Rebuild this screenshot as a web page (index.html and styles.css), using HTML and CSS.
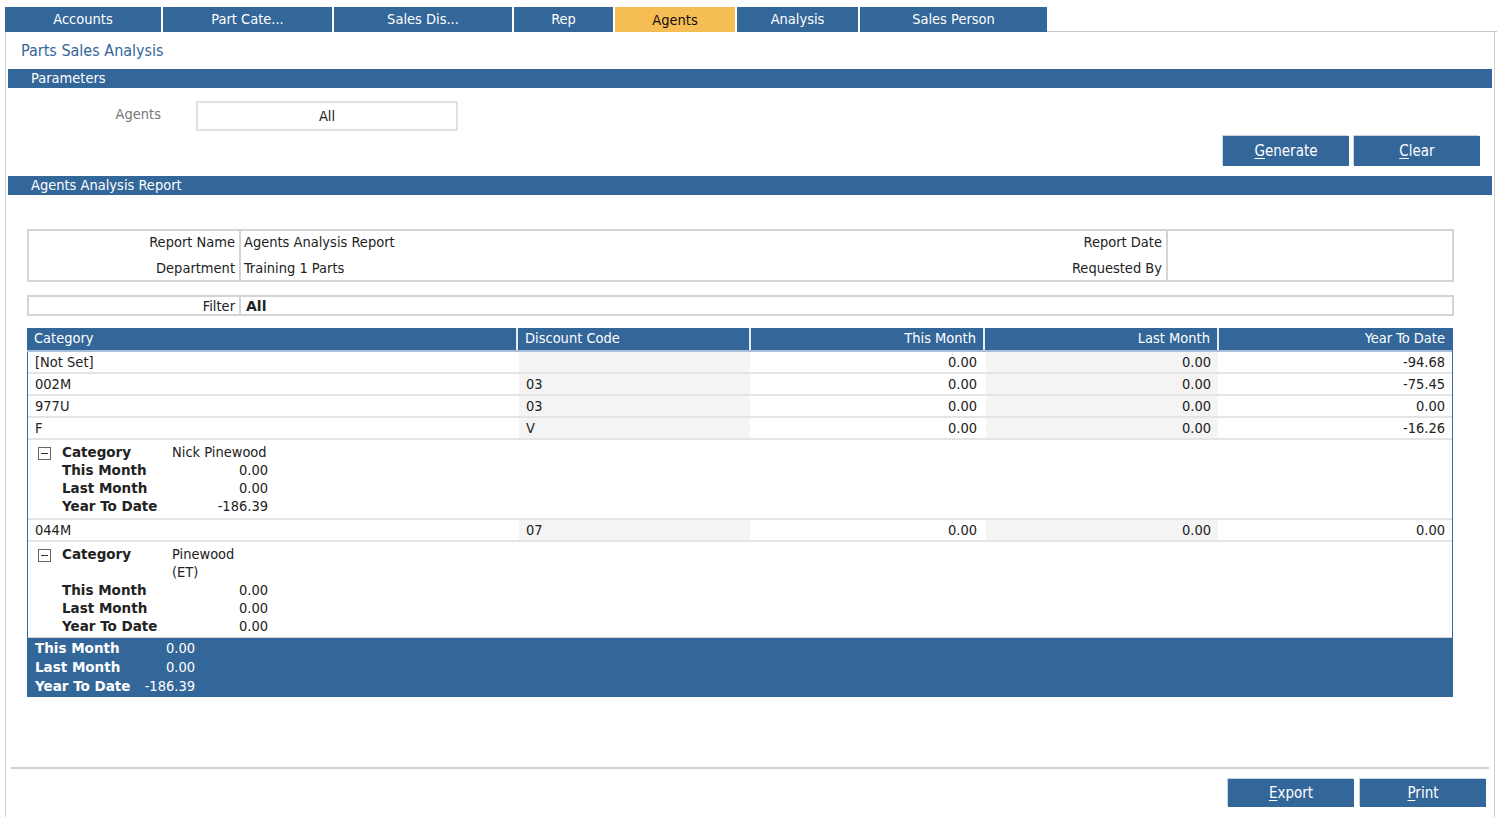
FILE: index.html
```html
<!DOCTYPE html>
<html lang="en">
<head>
    <meta charset="UTF-8">
    <title>Parts Sales Analysis</title>
    <link rel="stylesheet" href="styles.css">
</head>
<body>
    <div id="tabs">
        <div class="tab w156">Accounts</div>
        <div class="tab w169">Part Cate...</div>
        <div class="tab w178">Sales Dis...</div>
        <div class="tab w99">Rep</div>
        <div class="tab w120 active">Agents</div>
        <div class="tab w121">Analysis</div>
        <div class="tab w187">Sales Person</div>
        <div class="tab-rest"></div>
    </div>
    <div id="panel">
        <div class="page-title">Parts Sales Analysis</div>
        <div class="bar">Parameters</div>
        <div class="param-row">
            <div class="param-label">Agents</div>
            <div class="param-input">All</div>
        </div>
        <div class="btn-row">
            <div class="btn"><u>G</u>enerate</div>
            <div class="btn"><u>C</u>lear</div>
        </div>
        <div class="bar">Agents Analysis Report</div>

        <div class="report">
            <div class="info-box">
                <div class="info-left">
                    <div class="info-labels">
                        <div>Report Name</div>
                        <div>Department</div>
                    </div>
                    <div class="info-values">
                        <div>Agents Analysis Report</div>
                        <div>Training 1 Parts</div>
                    </div>
                </div>
                <div class="info-right">
                    <div class="info-labels">
                        <div>Report Date</div>
                        <div>Requested By</div>
                    </div>
                    <div class="info-values"></div>
                </div>
            </div>

            <div class="filter-box">
                <div class="filter-label">Filter</div>
                <div class="filter-value">All</div>
            </div>

            <div class="grid">
                <div class="grid-head">
                    <div class="c1">Category</div>
                    <div class="c2">Discount Code</div>
                    <div class="c3 num">This Month</div>
                    <div class="c4 num">Last Month</div>
                    <div class="c5 num">Year To Date</div>
                </div>
                <div class="grid-row">
                    <div class="c1">[Not Set]</div>
                    <div class="c2 alt"></div>
                    <div class="c3 num">0.00</div>
                    <div class="c4 num alt">0.00</div>
                    <div class="c5 num">-94.68</div>
                </div>
                <div class="grid-row">
                    <div class="c1">002M</div>
                    <div class="c2 alt">03</div>
                    <div class="c3 num">0.00</div>
                    <div class="c4 num alt">0.00</div>
                    <div class="c5 num">-75.45</div>
                </div>
                <div class="grid-row">
                    <div class="c1">977U</div>
                    <div class="c2 alt">03</div>
                    <div class="c3 num">0.00</div>
                    <div class="c4 num alt">0.00</div>
                    <div class="c5 num">0.00</div>
                </div>
                <div class="grid-row">
                    <div class="c1">F</div>
                    <div class="c2 alt">V</div>
                    <div class="c3 num">0.00</div>
                    <div class="c4 num alt">0.00</div>
                    <div class="c5 num">-16.26</div>
                </div>
                <div class="group-foot">
                    <span class="toggle"></span>
                    <div class="gf-table">
                        <div class="gf-key">Category</div><div class="gf-name">Nick Pinewood</div>
                        <div class="gf-key">This Month</div><div class="gf-val">0.00</div>
                        <div class="gf-key">Last Month</div><div class="gf-val">0.00</div>
                        <div class="gf-key">Year To Date</div><div class="gf-val">-186.39</div>
                    </div>
                </div>
                <div class="grid-row">
                    <div class="c1">044M</div>
                    <div class="c2 alt">07</div>
                    <div class="c3 num">0.00</div>
                    <div class="c4 num alt">0.00</div>
                    <div class="c5 num">0.00</div>
                </div>
                <div class="group-foot last">
                    <span class="toggle"></span>
                    <div class="gf-table">
                        <div class="gf-key">Category</div><div class="gf-name">Pinewood<br>(ET)</div>
                        <div class="gf-key">This Month</div><div class="gf-val">0.00</div>
                        <div class="gf-key">Last Month</div><div class="gf-val">0.00</div>
                        <div class="gf-key">Year To Date</div><div class="gf-val">0.00</div>
                    </div>
                </div>
                <div class="grand-total">
                    <div class="gt-key">This Month</div><div class="gt-val">0.00</div>
                    <div class="gt-key">Last Month</div><div class="gt-val">0.00</div>
                    <div class="gt-key">Year To Date</div><div class="gt-val">-186.39</div>
                </div>
            </div>
        </div>

        <div class="footer">
            <div class="btn"><u>E</u>xport</div>
            <div class="btn"><u>P</u>rint</div>
        </div>
    </div>
</body>
</html>
```

FILE: styles.css
```css
body {
    margin: 0;
    background: #fff;
    font-family: "DejaVu Sans Condensed", "DejaVu Sans", sans-serif;
    font-size: 14.5px;
    color: #222;
    overflow: hidden;
}
.gf-key, .gt-key, .filter-value {
    font-family: "DejaVu Sans", sans-serif;
    font-weight: bold;
    font-size: 13.5px;
    white-space: nowrap;
}
#tabs {
    display: flex;
    padding: 7px 0 0 5px;
    height: 25px;
}
.tab {
    background: #336699;
    color: #fff;
    text-align: center;
    line-height: 25px;
    font-size: 14.5px;
    margin-right: 2px;
    flex: none;
}
.tab.active {
    background: #f7bd55;
    color: #111;
    line-height: 27px;
}
.w156 { width: 156px; }
.w169 { width: 169px; }
.w178 { width: 178px; }
.w99 { width: 99px; }
.w120 { width: 120px; }
.w121 { width: 121px; }
.w187 { width: 187px; }
.tab-rest {
    flex: 1;
    border-bottom: 1px solid #c8c8c8;
    margin-right: 1px;
    margin-left: -2px;
}
#panel {
    margin-left: 5px;
    width: 1490px;
    height: 785px;
    border-left: 1px solid #d0d0d0;
    border-right: 1px solid #d0d0d0;
    box-sizing: border-box;
    padding: 0 2px;
    display: flex;
    flex-direction: column;
}
.page-title {
    color: #336699;
    font-size: 16px;
    padding: 9px 0 0 13px;
    height: 28px;
}
.bar {
    background: #336699;
    color: #fff;
    font-size: 14.5px;
    height: 19px;
    line-height: 19px;
    padding-left: 23px;
}
.param-row {
    display: flex;
    align-items: center;
    margin-top: 13px;
    height: 30px;
}
.param-label {
    width: 153px;
    text-align: right;
    color: #777;
    margin-top: -4px;
}
.param-input {
    margin-left: 35px;
    width: 258px;
    height: 26px;
    border: 2px solid #dde2e8;
    text-align: center;
    line-height: 26px;
}
.btn-row {
    display: flex;
    justify-content: flex-end;
    gap: 5px;
    padding-right: 12px;
    margin-top: 5px;
    margin-bottom: 10px;
}
.btn {
    width: 126px;
    height: 30px;
    line-height: 30px;
    background: #336699;
    color: #fff;
    text-align: center;
    font-size: 15px;
    box-shadow: -1px -1px 0 #c9d4e0;
}
.btn u {
    text-decoration-thickness: 1px;
    text-underline-offset: 2px;
}
.report {
    padding: 34px 38px 0 19px;
}
.info-box {
    display: flex;
    border: 2px solid #d4d4d4;
    height: 49px;
}
.info-left, .info-right {
    display: flex;
}
.info-left { flex: 1; }
.info-right { width: 424px; }
.info-labels {
    text-align: right;
    padding: 0 4px 0 0;
    line-height: 26px;
    border-right: 2px solid #d4d4d4;
}
.info-labels > div, .info-values > div {
    position: relative;
    top: -2px;
}
.info-left .info-labels { width: 206px; }
.info-right .info-labels { width: 134px; }
.info-values {
    padding: 0 0 0 3px;
    line-height: 26px;
    flex: 1;
}
.filter-box {
    display: flex;
    border: 2px solid #d4d4d4;
    height: 17px;
    margin-top: 13px;
    line-height: 18px;
}
.filter-label {
    width: 206px;
    text-align: right;
    padding-right: 4px;
    border-right: 2px solid #d4d4d4;
}
.filter-value {
    padding-left: 5px;
    font-size: 14px;
}
.grid {
    margin-top: 12px;
    margin-right: 1px;
    border-left: 1px solid #336699;
    border-right: 1px solid #336699;
}
.grid-head, .grid-row {
    display: flex;
}
.grid-head {
    background: #336699;
    color: #fff;
    height: 22px;
    line-height: 20px;
    border-bottom: 2px solid #a9bfd8;
    margin-left: -1px;
}
.grid-head > div {
    border-right: 2px solid #e6ecf3;
}
.grid-head > div:last-child { border-right: none; }
.grid-row {
    height: 20px;
    line-height: 20px;
    border-bottom: 2px solid #e4e4e4;
}
.grid-row > div, .grid-head > div {
    padding: 0 7px;
    box-sizing: border-box;
    overflow: hidden;
}
.grid-row > div { margin-right: 2px; }
.grid-row > div:last-child { margin-right: 0; }
.c1 { width: 489px; }
.c2 { width: 233px; }
.c3 { width: 234px; }
.c4 { width: 234px; }
.c5 { flex: 1; }
.grid-head .c1 { width: 491px; }
.grid-row .c1 { width: 489px; }
.grid-row .c2 { width: 231px; }
.grid-row .c3, .grid-row .c4 { width: 232px; }
.num { text-align: right; }
.alt { background: #f4f4f4; }
.group-foot {
    display: flex;
    padding: 3px 0 0 10px;
    height: 75px;
    border-bottom: 2px solid #e4e4e4;
}
.group-foot.last {
    height: 92px;
    border-bottom: 1px solid #d4d4d4;
}
.toggle {
    width: 11px;
    height: 11px;
    border: 1px solid #666;
    margin-top: 4px;
    margin-right: 11px;
    position: relative;
    flex: none;
}
.toggle::after {
    content: "";
    position: absolute;
    left: 2px;
    top: 5px;
    width: 7px;
    height: 1px;
    background: #333;
}
.gf-table {
    display: grid;
    grid-template-columns: 110px 96px;
    line-height: 18px;
    align-content: start;
}
.gf-val { text-align: right; }
.gf-name { padding-left: 0; }
.grand-total {
    background: #336699;
    color: #fff;
    display: grid;
    grid-template-columns: 104px 56px;
    line-height: 19px;
    padding: 1px 0 1px 8px;
    margin: 0 -1px;
    height: 57px;
}
.gt-val { text-align: right; }
.footer {
    margin-top: auto;
    margin-left: 3px;
    margin-right: 3px;
    border-top: 2px solid #d0d0d0;
    display: flex;
    justify-content: flex-end;
    gap: 6px;
    padding: 10px 3px 10px 0;
}
.footer .btn {
    height: 28px;
    line-height: 28px;
}
```
